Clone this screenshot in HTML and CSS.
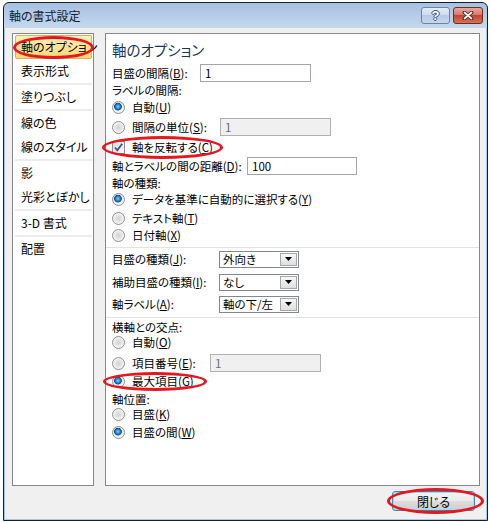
FILE: index.html
```html
<!DOCTYPE html>
<html lang="ja">
<head>
<meta charset="utf-8">
<title>軸の書式設定</title>
<link rel="stylesheet" href="styles.css">
</head>
<body>
<div class="window">
  <div class="titlebar">
    <span class="title">軸の書式設定</span>
    <span class="tb-btn help">?</span>
    <span class="tb-btn close"><svg width="14" height="9" viewBox="0 0 14 9"><path d="M3.5 1.5 L10.5 7.5 M10.5 1.5 L3.5 7.5" stroke="#4a1a15" stroke-width="3.6" stroke-linecap="round" fill="none"/><path d="M3.5 1.5 L10.5 7.5 M10.5 1.5 L3.5 7.5" stroke="#ffffff" stroke-width="1.8" stroke-linecap="round" fill="none"/></svg></span>
  </div>
  <div class="client">
    <div class="panels">
      <ul class="nav">
        <li class="item selected">軸のオプション</li>
        <li class="item">表示形式</li>
        <li class="sep"></li>
        <li class="item">塗りつぶし</li>
        <li class="sep"></li>
        <li class="item">線の色</li>
        <li class="item">線のスタイル</li>
        <li class="sep"></li>
        <li class="item">影</li>
        <li class="item">光彩とぼかし</li>
        <li class="sep"></li>
        <li class="item">3-D 書式</li>
        <li class="sep"></li>
        <li class="item">配置</li>
      </ul>
      <div class="pane">
        <h1 class="heading">軸のオプション</h1>
        <div class="row fld mt4"><span class="lbl w88">目盛の間隔(<u>B</u>):</span><span class="input">1</span></div>
        <div class="row mt1">ラベルの間隔:</div>
        <div class="row mt3"><span class="radio on"></span>自動(<u>U</u>)</div>
        <div class="row fld mt4"><span class="radio"></span><span class="lbl w88">間隔の単位(<u>S</u>):</span><span class="input dis">1</span></div>
        <div class="row mt4"><span class="check"><svg width="11" height="11" viewBox="0 0 11 11"><path d="M2 5.5 L4.3 8.3 L9.2 1.8" stroke="#3f5689" stroke-width="1.8" fill="none"/></svg></span>軸を反転する(<u>C</u>)</div>
        <div class="row fld mt3"><span class="lbl w135">軸とラベルの間の距離(<u>D</u>):</span><span class="input w110">100</span></div>
        <div class="row mt1">軸の種類:</div>
        <div class="row mt2"><span class="radio on"></span>データを基準に自動的に選択する(<u>Y</u>)</div>
        <div class="row mt5"><span class="radio"></span>テキスト軸(<u>T</u>)</div>
        <div class="row mt3"><span class="radio"></span>日付軸(<u>X</u>)</div>
        <div class="hsep mt5"></div>
        <div class="row fld mt2"><span class="lbl w107">目盛の種類(<u>J</u>):</span><span class="select"><span class="val">外向き</span><span class="drop"><svg width="7" height="4" viewBox="0 0 7 4"><path d="M0 0 H7 L3.5 4 Z" fill="#000"/></svg></span></span></div>
        <div class="row fld mt5"><span class="lbl w107">補助目盛の種類(<u>I</u>):</span><span class="select"><span class="val">なし</span><span class="drop"><svg width="7" height="4" viewBox="0 0 7 4"><path d="M0 0 H7 L3.5 4 Z" fill="#000"/></svg></span></span></div>
        <div class="row fld mt4"><span class="lbl w107">軸ラベル(<u>A</u>):</span><span class="select"><span class="val">軸の下/左</span><span class="drop"><svg width="7" height="4" viewBox="0 0 7 4"><path d="M0 0 H7 L3.5 4 Z" fill="#000"/></svg></span></span></div>
        <div class="hsep mt4"></div>
        <div class="row mt2">横軸との交点:</div>
        <div class="row mt1"><span class="radio"></span>自動(<u>O</u>)</div>
        <div class="row fld mt5"><span class="radio"></span><span class="lbl w78">項目番号(<u>E</u>):</span><span class="input dis">1</span></div>
        <div class="row mt2"><span class="radio on"></span>最大項目(<u>G</u>)</div>
        <div class="row mt4">軸位置:</div>
        <div class="row mt1"><span class="radio"></span>目盛(<u>K</u>)</div>
        <div class="row mt4"><span class="radio on"></span>目盛の間(<u>W</u>)</div>
      </div>
    </div>
    <div class="buttons"><button class="btn">閉じる</button></div>
  </div>
</div>
<div class="mark m1"></div>
<div class="mark m2"></div>
<div class="mark m3"></div>
<div class="mark m4"></div>
</body>
</html>
```
FILE: styles.css
```css
* { box-sizing: border-box; }
html, body { margin: 0; padding: 0; }
body {
  position: relative;
  width: 490px;
  height: 522px;
  overflow: hidden;
  padding: 2px 0 0 3px;
  background: #ffffff;
  font-family: "Noto Sans CJK JP", "Noto Sans", sans-serif;
  font-size: 12px;
  color: #000;
  font-feature-settings: "palt";
}
.window {
  width: 485px;
  height: 519px;
  border: 1px solid #1c1c1c;
  border-radius: 6px 6px 0 0;
  background: linear-gradient(#a7c1e0, #c5d8ee 25px);
  display: flex;
  flex-direction: column;
}
.titlebar {
  height: 25px;
  flex: none;
  display: flex;
  align-items: flex-start;
  padding: 0 4px 0 5px;
}
.title {
  flex: 1;
  line-height: 25px;
  font-size: 12px;
  color: #101b2b;
}
.tb-btn {
  margin-top: 4px;
  height: 17px;
  border-radius: 3px;
  display: flex;
  align-items: center;
  justify-content: center;
}
.help {
  width: 29px;
  margin-right: 3px;
  border: 1px solid #6a82a3;
  background: linear-gradient(#e4edf8, #cddcee 45%, #b4cae5 50%, #c6d8ee);
  color: #fff;
  font: bold 13px "Liberation Sans", sans-serif;
  line-height: 15px;
  text-shadow: 1px 0 #3d5577, -1px 0 #3d5577, 0 1px #3d5577, 0 -1px #3d5577;
}
.close {
  width: 30px;
  border: 1px solid #6e2a23;
  background: linear-gradient(#eaa99b, #d8796a 45%, #c4462f 50%, #d2735c);
}
.client {
  flex: 1;
  background: #f0f0f0;
  border: 1px solid #a6c8ea;
  border-top: none;
  display: flex;
  flex-direction: column;
}
.panels {
  display: flex;
  gap: 11px;
  padding: 5px 6px 0 7px;
}
.nav {
  width: 82px;
  height: 453px;
  margin: 0;
  padding: 1px 1px 0 2px;
  list-style: none;
  background: #fff;
  border: 1px solid #828790;
}
.item {
  height: 24px;
  line-height: 22px;
  padding-left: 5px;
  border: 1px solid transparent;
  white-space: nowrap;
}
.item.selected {
  background: linear-gradient(#fdefb8, #fbd874);
  border-color: #d9b25c;
  border-radius: 2px;
}
.sep {
  height: 2px;
  background: #ececec;
}
.pane {
  width: 375px;
  height: 453px;
  background: #fff;
  border: 1px solid #828790;
  padding: 6px 0 0 6px;
  font-size: 11.5px;
}
.heading {
  margin: 0;
  height: 20px;
  line-height: 20px;
  font-size: 14.5px;
  font-weight: normal;
  color: #17325c;
}
.row {
  display: flex;
  align-items: center;
  height: 14px;
  line-height: 14px;
  white-space: nowrap;
}
.row.fld { height: 18px; }
.mt1 { margin-top: 1px; }
.mt2 { margin-top: 2px; }
.mt3 { margin-top: 3px; }
.mt4 { margin-top: 4px; }
.mt5 { margin-top: 5px; }
.lbl { flex: none; }
.w78 { width: 78px; }
.w88 { width: 88px; }
.w107 { width: 107px; }
.w135 { width: 135px; }
.input {
  width: 111px;
  height: 18px;
  border: 1px solid #a3a7ad;
  background: #fff;
  padding-left: 4px;
  line-height: 16px;
}
.input.w110 { width: 110px; }
.input.dis {
  background: #f0f0f0;
  color: #6d6d6d;
  border-color: #adb1b5;
}
.radio {
  flex: none;
  width: 13px;
  height: 13px;
  margin-right: 7px;
  border-radius: 50%;
  border: 1px solid #8e8f8f;
  background: radial-gradient(circle, #d2d2d2 0, #e4e4e4 3px, #f5f5f5 5.5px);
}
.radio.on {
  background: radial-gradient(circle at 45% 42%, #86d3f8 0, #2a8fd0 2px, #0d4d8c 3.5px, #e9e9e9 4.2px, #f4f4f4 6px);
}
.check {
  flex: none;
  width: 13px;
  height: 13px;
  margin-right: 7px;
  border: 1px solid #8e8f8f;
  background: linear-gradient(135deg, #dadada, #fafafa);
  display: flex;
  align-items: center;
  justify-content: center;
}
.select {
  width: 80px;
  height: 17px;
  display: flex;
  border: 1px solid #828790;
  background: #fff;
}
.val {
  flex: 1;
  padding-left: 3px;
  line-height: 15px;
}
.drop {
  width: 17px;
  margin: 1px;
  border: 1px solid #a4a7ab;
  background: linear-gradient(#f7f7f7, #dfdfdf);
  display: flex;
  align-items: center;
  justify-content: center;
}
.hsep {
  height: 1px;
  margin-left: -6px;
  background: #e2e2e2;
}
.buttons {
  display: flex;
  justify-content: flex-end;
  padding: 5px 11px 0 0;
}
.btn {
  width: 83px;
  height: 20px;
  padding: 0;
  border: 1px solid #3a8ec4;
  border-radius: 3px;
  background: linear-gradient(#f3f3f3, #ebebeb 48%, #dddddd 52%, #cfcfcf);
  box-shadow: inset 0 0 0 1px #8fe0fa;
  font-family: "Noto Sans CJK JP", sans-serif;
  font-feature-settings: "palt";
  font-size: 12px;
  color: #000;
}
.mark {
  position: absolute;
  border: 3px solid #e5171f;
  border-radius: 50%;
}
.m1 { left: 13px; top: 36px; width: 81px; height: 23px; }
.m2 { left: 102px; top: 136px; width: 121px; height: 23px; }
.m3 { left: 103px; top: 372px; width: 104px; height: 19px; }
.m4 { left: 387px; top: 488px; width: 97px; height: 26px; }
```
